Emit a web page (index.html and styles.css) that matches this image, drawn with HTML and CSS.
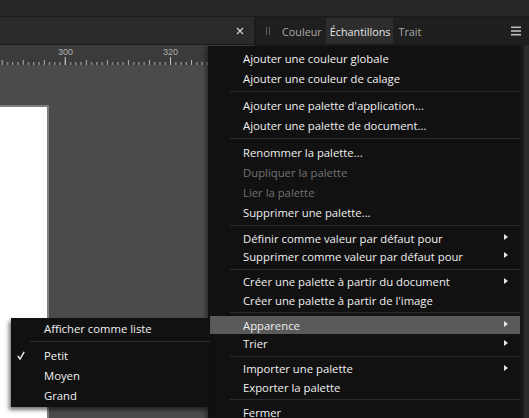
FILE: index.html
```html
<!DOCTYPE html>
<html lang="fr">
<head>
<meta charset="utf-8">
<title>Échantillons</title>
<link rel="stylesheet" href="styles.css">
</head>
<body>
<div class="app">
  <div class="topbar"></div>
  <div class="main">
    <div class="doc">
      <div class="doctabs">
        <svg class="close" width="8" height="8" viewBox="0 0 8 8"><path d="M1 1 L7 7 M7 1 L1 7" stroke="#cfcfcf" stroke-width="1.3"/></svg>
      </div>
      <div class="ruler">
        <svg width="254" height="20" viewBox="0 0 254 20">
          <defs>
            <pattern id="ticks" patternUnits="userSpaceOnUse" x="1.68" y="0" width="21.04" height="20">
              <rect x="0" y="15" width="1" height="5" fill="#b4b4b4"/>
              <rect x="5.26" y="17" width="1" height="3" fill="#b4b4b4"/>
              <rect x="10.52" y="17" width="1" height="3" fill="#b4b4b4"/>
              <rect x="15.78" y="17" width="1" height="3" fill="#b4b4b4"/>
            </pattern>
          </defs>
          <rect x="0" y="0" width="254" height="20" fill="url(#ticks)"/>
          <rect x="64.8" y="12" width="1" height="8" fill="#c8c8c8"/>
          <rect x="170" y="12" width="1" height="8" fill="#c8c8c8"/>
          <text x="65.5" y="10" class="rnum" text-anchor="middle">300</text>
          <text x="170.6" y="10" class="rnum" text-anchor="middle">320</text>
        </svg>
      </div>
      <div class="canvas"><div class="page"></div></div>
    </div>
    <div class="panel">
      <div class="panelhead">
        <span class="grip"></span>
        <span class="tab">Couleur</span>
        <span class="tab active">Échantillons</span>
        <span class="tab">Trait</span>
        <svg class="burger" width="10" height="10" viewBox="0 0 10 10"><rect x="0" y="0.5" width="10" height="1.6" fill="#bdbdbd"/><rect x="0" y="4.2" width="10" height="1.6" fill="#bdbdbd"/><rect x="0" y="7.9" width="10" height="1.6" fill="#bdbdbd"/></svg>
      </div>
      <div class="panelbody"><div class="scroll"></div></div>
    </div>
  </div>

  <div class="menu">
    <div class="item">Ajouter une couleur globale</div>
    <div class="item">Ajouter une couleur de calage</div>
    <div class="sep"></div>
    <div class="item">Ajouter une palette d'application...</div>
    <div class="item">Ajouter une palette de document...</div>
    <div class="sep"></div>
    <div class="item">Renommer la palette...</div>
    <div class="item disabled">Dupliquer la palette</div>
    <div class="item disabled">Lier la palette</div>
    <div class="item">Supprimer une palette...</div>
    <div class="sep"></div>
    <div class="item sm sub">Définir comme valeur par défaut pour</div>
    <div class="item sm sub">Supprimer comme valeur par défaut pour</div>
    <div class="sep"></div>
    <div class="item sm sub">Créer une palette à partir du document</div>
    <div class="item sm">Créer une palette à partir de l'image</div>
    <div class="sep"></div>
    <div class="item sm sub hover">Apparence</div>
    <div class="item sm sub">Trier</div>
    <div class="sep"></div>
    <div class="item sm sub">Importer une palette</div>
    <div class="item sm">Exporter la palette</div>
    <div class="sep"></div>
    <div class="item sm">Fermer</div>
  </div>

  <div class="submenu">
    <div class="sitem">Afficher comme liste</div>
    <div class="ssep"></div>
    <div class="sitem">
      <svg class="check" width="8" height="9" viewBox="0 0 8 9"><path d="M0.8 4.8 L3 8 L7.2 0.8" fill="none" stroke="#f0f0f0" stroke-width="1.4"/></svg>
      Petit
    </div>
    <div class="sitem">Moyen</div>
    <div class="sitem">Grand</div>
  </div>
</div>
</body>
</html>
```

FILE: styles.css
```css
html, body {
  margin: 0;
  padding: 0;
  background: #4b4b4b;
  overflow: hidden;
}

.app {
  position: relative;
  width: 529px;
  height: 418px;
  overflow: hidden;
  font-family: "Open Sans", "Noto Sans", sans-serif;
  font-size: 11.3px;
  color: #efefef;
}

.topbar {
  height: 16px;
  background: #272727;
  border-bottom: 1px solid #1a1a1a;
}

.main {
  display: flex;
  height: 401px;
}

.doc {
  width: 254px;
  border-right: 2px solid #1a1a1a;
  display: flex;
  flex-direction: column;
}

.doctabs {
  height: 27px;
  flex: none;
  background: #2a2a2a;
  border-bottom: 1px solid #1c1c1c;
  display: flex;
  align-items: center;
  justify-content: flex-end;
  padding-right: 10px;
}

.close {
  display: block;
}

.ruler {
  height: 20px;
  flex: none;
  background: #3b3b3b;
}

.ruler svg {
  display: block;
}

.rnum {
  font-family: "Liberation Sans", Arial, sans-serif;
  font-size: 9px;
  fill: #b0b0b0;
}

.canvas {
  flex: 1;
  background: #4b4b4b;
  padding-top: 40px;
}

.page {
  width: 47px;
  height: 100%;
  background: #ffffff;
  border-top: 2px solid #7f7f7f;
  border-right: 2px solid #7f7f7f;
}

.panel {
  flex: 1;
  display: flex;
  flex-direction: column;
  background: #1c1c1c;
}

.panelhead {
  height: 27px;
  flex: none;
  background: #1f1f1f;
  border-bottom: 1px solid #1a1a1a;
  display: flex;
  align-items: stretch;
}

.grip {
  width: 4px;
  height: 8px;
  align-self: center;
  margin-left: 10px;
  margin-right: 12px;
  border-left: 1px solid #5a5a5a;
  border-right: 1px solid #5a5a5a;
  box-sizing: border-box;
}

.tab {
  display: flex;
  align-items: center;
  padding-top: 1px;
  color: #a9a9a9;
  font-size: 10.8px;
}

.tab.active {
  background: #2d2d2d;
  color: #e8e8e8;
  margin: 1px 5px 0 4px;
  padding: 0 3px 0 4px;
}

.burger {
  align-self: center;
  margin-left: auto;
  margin-right: 8px;
}

.panelbody {
  flex: 1;
  display: flex;
  justify-content: flex-end;
}

.scroll {
  width: 5px;
  background: #2b2b2b;
}

/* context menu */
.menu {
  position: absolute;
  left: 208px;
  top: 46px;
  width: 313px;
  height: 380px;
  background: #121112;
  padding-top: 2px;
  box-shadow: -2px 2px 4px rgba(0, 0, 0, 0.45);
}

.item {
  position: relative;
  height: 20px;
  display: flex;
  align-items: center;
  padding-left: 33px;
  margin: 0 1px 0 2px;
  white-space: nowrap;
  color: #f0f0f0;
}

.item.sm {
  height: 18.3px;
}

.item.disabled {
  color: #737373;
}

.item.hover {
  background: #5a5a5a;
}

.item.sub::after {
  content: "";
  position: absolute;
  right: 12px;
  top: 50%;
  margin-top: -4px;
  border-left: 4px solid #e6e6e6;
  border-top: 3.5px solid transparent;
  border-bottom: 3.5px solid transparent;
}

.sep {
  height: 1px;
  background: #2c2c2c;
  margin: 3px 1px 3px 22px;
}

/* submenu */
.submenu {
  position: absolute;
  left: 11px;
  top: 318px;
  width: 199px;
  height: 87px;
  padding: 0 0 2px;
  background: #121112;
  box-shadow: -2px 3px 4px rgba(0, 0, 0, 0.55);
}

.sitem {
  position: relative;
  height: 20px;
  display: flex;
  align-items: center;
  padding-left: 33px;
  color: #f0f0f0;
}

.check {
  position: absolute;
  left: 6px;
  top: 6px;
}

.ssep {
  height: 1px;
  background: #2c2c2c;
  margin: 3px 0 3px 19px;
}
```
